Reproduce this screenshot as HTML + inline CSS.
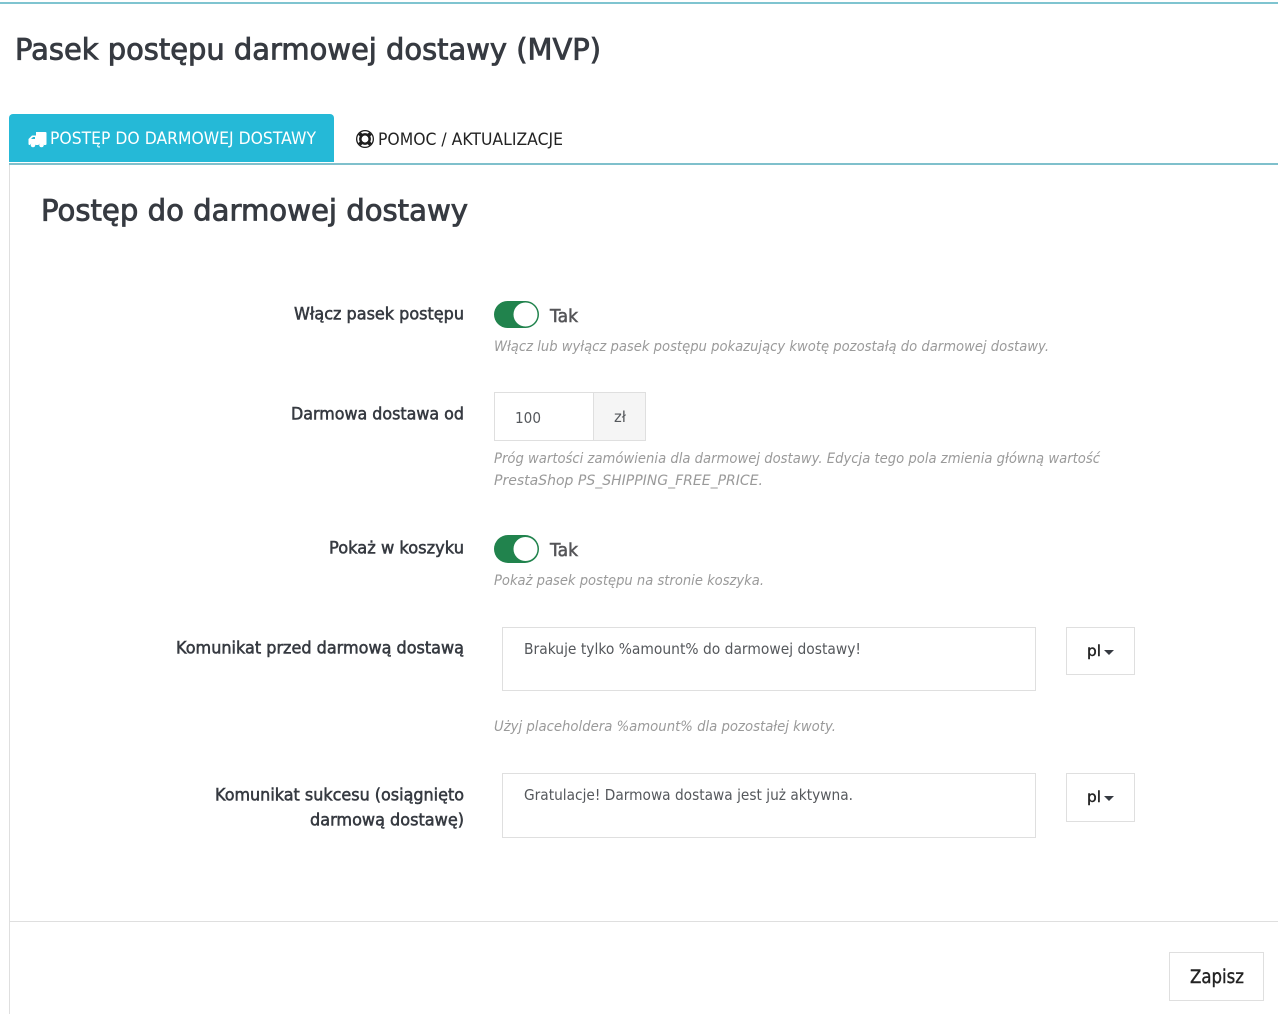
<!DOCTYPE html>
<html lang="pl"><head><meta charset="utf-8"><title>Pasek postępu darmowej dostawy (MVP)</title>
<style>
html,body{margin:0;padding:0;background:#fff;width:1278px;height:1014px;overflow:hidden}
svg{display:block}
text{font-family:"DejaVu Sans","Liberation Sans",sans-serif;fill:#363a41}
.l{font-size:16.5px;font-weight:400;stroke:#363a41;stroke-width:.55px}
.h{font-size:14.5px;font-style:italic;fill:#9a9a9a}
.i{font-size:15px;fill:#55585c}
.b{fill:#fff;stroke:#dfdfdf;stroke-width:1}
</style></head><body>
<svg width="1278" height="1014" viewBox="0 0 1278 1014" xmlns="http://www.w3.org/2000/svg">
<rect x="0" y="2" width="1278" height="2" fill="#7fc4d0"/>
<text x="15" y="59.500" font-size="29" textLength="586" lengthAdjust="spacingAndGlyphs" style="stroke:#363a41;stroke-width:.85px">Pasek postępu darmowej dostawy (MVP)</text>

<path d="M9 162V118a4 4 0 0 1 4-4H330a4 4 0 0 1 4 4V162Z" fill="#25b9d7"/>
<rect x="9" y="163" width="1269" height="2" fill="#7fc0cc"/>
<rect x="9" y="165" width="1" height="849" fill="#dfdfdf"/>
<path d="M36 132h9.500a1 1 0 0 1 1 1v11a1 1 0 0 1-1 1h-1.500a3 3 0 0 0-5.500 0h-3a3 3 0 0 0-5.500 0H29.500a1 1 0 0 1-1-1v-5l3.500-3.500h4Z" fill="#fff"/><path d="M31 139l2-2h2v2Z" fill="#25b9d7"/><circle cx="33" cy="145" r="2.300" fill="#fff"/><circle cx="41.500" cy="145" r="2.300" fill="#fff"/>
<text x="50" y="144" font-size="17" textLength="266" lengthAdjust="spacingAndGlyphs" style="fill:#fff">POSTĘP DO DARMOWEJ DOSTAWY</text>
<circle cx="365" cy="139" r="9" fill="#1c1c1c"/><circle cx="365" cy="139" r="6.800" fill="none" stroke="#fff" stroke-width="1.800"/><circle cx="365" cy="139" r="3.600" fill="#fff"/><circle cx="365" cy="139" r="4.200" fill="none" stroke="#1c1c1c" stroke-width="1.500"/><path d="M359.500 133.500l3 3M370.500 133.500l-3 3M359.500 144.500l3-3M370.500 144.500l-3-3" stroke="#1c1c1c" stroke-width="3.600"/>
<text x="378" y="145" font-size="17" textLength="185" lengthAdjust="spacingAndGlyphs" style="fill:#232323">POMOC / AKTUALIZACJE</text>

<text x="41" y="220.500" font-size="29" textLength="427" lengthAdjust="spacingAndGlyphs" style="stroke:#363a41;stroke-width:.85px">Postęp do darmowej dostawy</text>

<text class="l" x="294" y="319.500" textLength="170" lengthAdjust="spacingAndGlyphs">Włącz pasek postępu</text>
<rect x="494" y="301" width="45" height="27" rx="13.500" fill="#21834d"/><circle cx="525.500" cy="314.500" r="12" fill="#fff"/>
<text x="550" y="322" font-size="17.500" textLength="28" lengthAdjust="spacingAndGlyphs" style="fill:#555558;stroke:#555558;stroke-width:.55px">Tak</text>
<text class="h" x="494" y="351" textLength="555" lengthAdjust="spacingAndGlyphs">Włącz lub wyłącz pasek postępu pokazujący kwotę pozostałą do darmowej dostawy.</text>

<text class="l" x="291" y="419.500" textLength="173" lengthAdjust="spacingAndGlyphs">Darmowa dostawa od</text>
<rect class="b" x="494.500" y="392.500" width="151" height="48"/>
<rect x="594" y="393" width="51" height="47" fill="#f5f5f5"/><rect x="593" y="393" width="1" height="47" fill="#dfdfdf"/>
<text class="i" x="515" y="423" textLength="26" lengthAdjust="spacingAndGlyphs">100</text>
<text class="i" x="614" y="422" textLength="12" lengthAdjust="spacingAndGlyphs">zł</text>
<text class="h" x="494" y="463" textLength="606" lengthAdjust="spacingAndGlyphs">Próg wartości zamówienia dla darmowej dostawy. Edycja tego pola zmienia główną wartość</text>
<text class="h" x="494" y="485" textLength="269" lengthAdjust="spacingAndGlyphs">PrestaShop PS_SHIPPING_FREE_PRICE.</text>

<text class="l" x="329" y="553.500" textLength="135" lengthAdjust="spacingAndGlyphs">Pokaż w koszyku</text>
<rect x="494" y="535" width="45" height="28" rx="14" fill="#21834d"/><circle cx="525.500" cy="549" r="12" fill="#fff"/>
<text x="550" y="556" font-size="17.500" textLength="28" lengthAdjust="spacingAndGlyphs" style="fill:#555558;stroke:#555558;stroke-width:.55px">Tak</text>
<text class="h" x="494" y="585" textLength="270" lengthAdjust="spacingAndGlyphs">Pokaż pasek postępu na stronie koszyka.</text>

<text class="l" x="176" y="653.500" textLength="288" lengthAdjust="spacingAndGlyphs">Komunikat przed darmową dostawą</text>
<rect class="b" x="502.500" y="627.500" width="533" height="63"/>
<text class="i" x="524" y="654" textLength="337" lengthAdjust="spacingAndGlyphs">Brakuje tylko %amount% do darmowej dostawy!</text>
<rect class="b" x="1066.500" y="627.500" width="68" height="47"/>
<text x="1087" y="656" font-size="15.500" textLength="14" lengthAdjust="spacingAndGlyphs" style="fill:#232323;stroke:#232323;stroke-width:.4px">pl</text>
<path d="M1104 650h10l-5 5Z" fill="#363a41"/>
<text class="h" x="494" y="731" textLength="342" lengthAdjust="spacingAndGlyphs">Użyj placeholdera %amount% dla pozostałej kwoty.</text>

<text class="l" x="215" y="800.500" textLength="249" lengthAdjust="spacingAndGlyphs">Komunikat sukcesu (osiągnięto</text>
<text class="l" x="310" y="825.500" textLength="154" lengthAdjust="spacingAndGlyphs">darmową dostawę)</text>
<rect class="b" x="502.500" y="773.500" width="533" height="64"/>
<text class="i" x="524" y="800" textLength="329" lengthAdjust="spacingAndGlyphs">Gratulacje! Darmowa dostawa jest już aktywna.</text>
<rect class="b" x="1066.500" y="773.500" width="68" height="48"/>
<text x="1087" y="802" font-size="15.500" textLength="14" lengthAdjust="spacingAndGlyphs" style="fill:#232323;stroke:#232323;stroke-width:.4px">pl</text>
<path d="M1104 796h10l-5 5Z" fill="#363a41"/>

<rect x="10" y="921" width="1268" height="1" fill="#dfdfdf"/>
<rect class="b" x="1169.500" y="952.500" width="94" height="48"/>
<text x="1190" y="983" font-size="18.500" textLength="54" lengthAdjust="spacingAndGlyphs" style="fill:#232323;stroke:#232323;stroke-width:.4px">Zapisz</text>
</svg>
</body></html>
